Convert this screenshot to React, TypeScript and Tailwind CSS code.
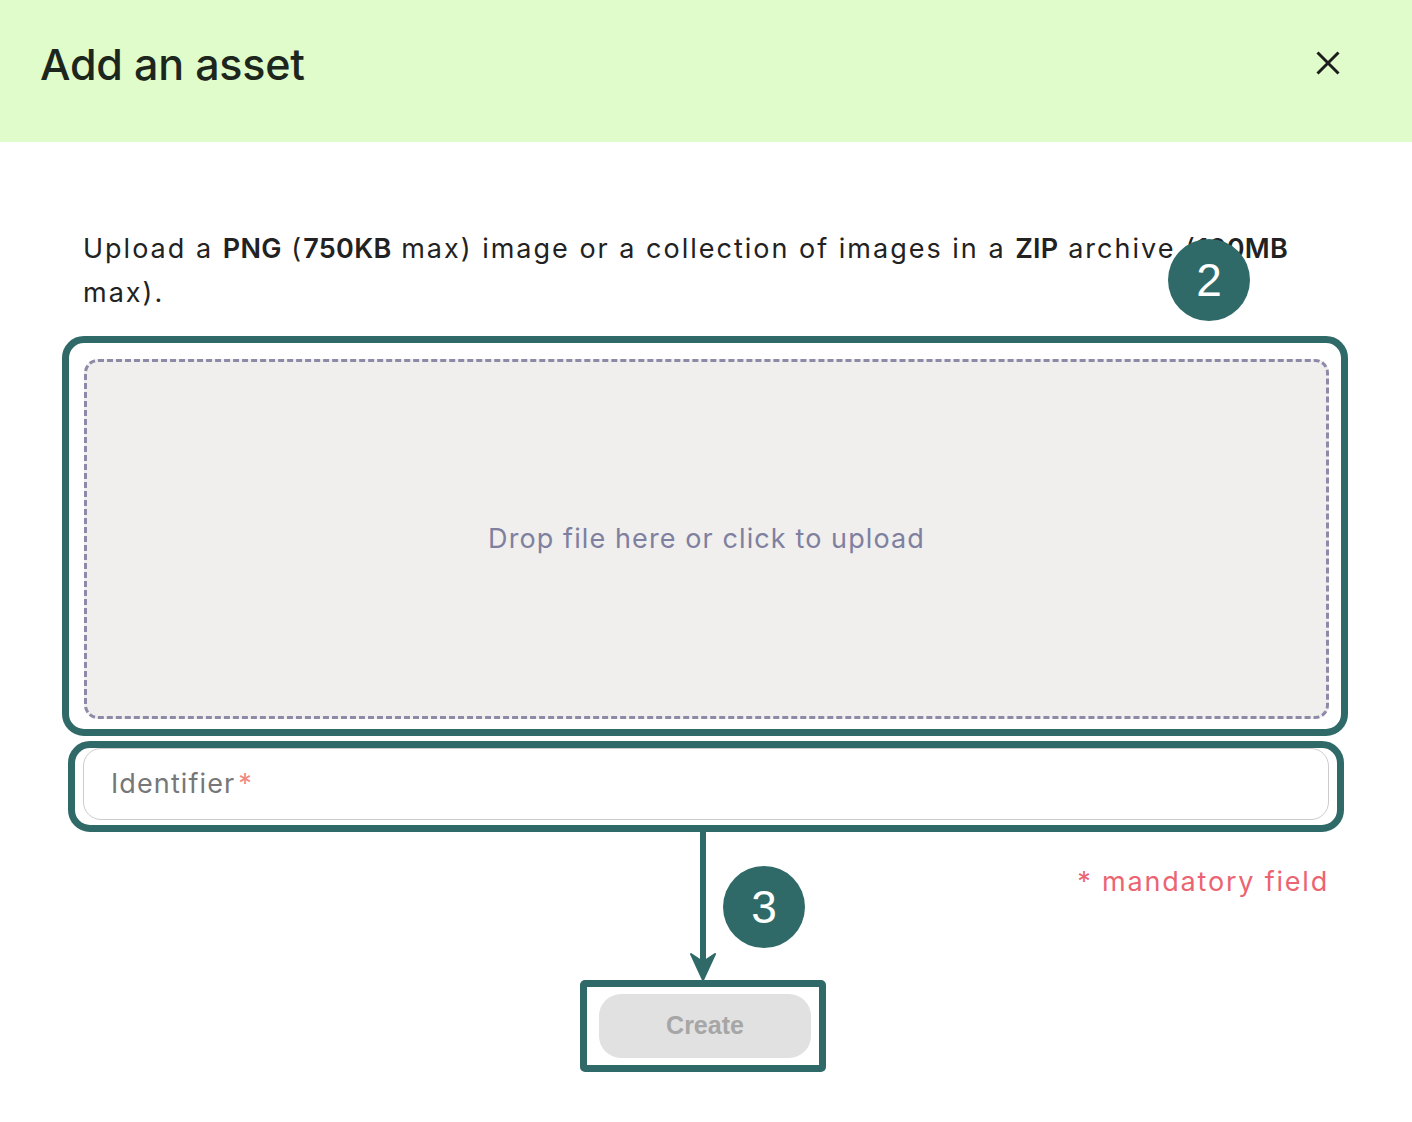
const font = { fontFamily: 'Inter, "Noto Sans", sans-serif' };
const badgeFont = { fontFamily: '"Liberation Sans", Arial, sans-serif' };

function B({ children }: { children: string }) {
    return <span className="font-semibold tracking-[0.3px]">{children}</span>;
}

export default function App() {
    return (
        <div className="relative min-h-[1122px] w-[1412px] bg-white text-[#1f1f1f]" style={font}>
            {/* ── Header ── */}
            <header className="h-[142px] bg-[#e0fccb] flex items-start justify-between pl-[40px] pr-[72px] pt-[36px]">
                <h1 className="text-[43px] leading-[56px] font-medium text-[#1d261d] tracking-[-0.2px]">Add an asset</h1>
                <button className="mt-[15px]" aria-label="Close">
                    <svg width="24" height="24" viewBox="0 0 24 24">
                        <path d="M1.5 1.5 L22.5 22.5 M22.5 1.5 L1.5 22.5" stroke="#1d1d1d" strokeWidth="3" />
                    </svg>
                </button>
            </header>

            {/* ── Body ── */}
            <main className="px-[83px] pt-[85px]">
                <p className="text-[27px] leading-[44px] tracking-[2px] text-[#222] pr-[24px]">
                    Upload a <B>PNG</B> (<B>750KB</B> max) image or a collection of images in a <B>ZIP</B> archive (<B>100MB</B> max).
                </p>

                {/* dropzone, outlined */}
                <div className="mt-[21px] -ml-[21px] -mr-[19px] border-[7px] border-[#2f6a68] rounded-[22px] pl-[15px] pr-[12px] pt-[16px] pb-[10px]">
                    <div className="h-[360px] rounded-[14px] border-[3px] border-dashed border-[#8c8aa6] bg-[#f0efed] flex items-center justify-center">
                        <span className="text-[27px] tracking-[1.1px] text-[#7f80a0]">Drop file here or click to upload</span>
                    </div>
                </div>

                {/* identifier, outlined */}
                <div className="mt-[5px] -ml-[15px] -mr-[15px] border-[7px] border-[#2f6a68] rounded-[22px] px-[8px] pb-[5px]">
                    <div className="h-[72px] rounded-[18px] border border-[#cccccc] flex items-center pl-[27px]">
                        <span className="text-[27px] tracking-[1.1px] text-[#777]">Identifier</span>
                        <span className="text-[27px] text-[#f08a80] ml-[3px]">*</span>
                    </div>
                </div>

                <p className="mt-[34px] text-right text-[27px] leading-[32px] tracking-[1.8px] text-[#eb6472]">* mandatory field</p>

                {/* create button, outlined */}
                <div className="mt-[82px] flex justify-center">
                    <div className="ml-[-6px] border-[7px] border-[#2f6a68] rounded-[5px] pl-[12px] pr-[8px] py-[7px]">
                        <button
                            className="w-[212px] h-[64px] rounded-[22px] bg-[#e1e1e1] text-[#a6a6a6] text-[25px] font-bold"
                            style={badgeFont}
                        >
                            Create
                        </button>
                    </div>
                </div>
            </main>

            {/* ── Annotations ── */}
            <svg className="absolute left-[686px] top-[828px]" width="36" height="156" viewBox="0 0 36 156">
                <line x1="17" y1="0" x2="17" y2="146" stroke="#2f6a68" strokeWidth="6" />
                <path d="M5 126 L17 152 L29 126 L17 134 Z" fill="#2f6a68" stroke="#2f6a68" strokeWidth="2" strokeLinejoin="round" />
            </svg>

            <div
                className="absolute left-[1168px] top-[239px] w-[82px] h-[82px] rounded-full bg-[#2f6a68] text-white flex items-center justify-center text-[46px]"
                style={badgeFont}
            >
                2
            </div>
            <div
                className="absolute left-[723px] top-[866px] w-[82px] h-[82px] rounded-full bg-[#2f6a68] text-white flex items-center justify-center text-[46px]"
                style={badgeFont}
            >
                3
            </div>
        </div>
    );
}
